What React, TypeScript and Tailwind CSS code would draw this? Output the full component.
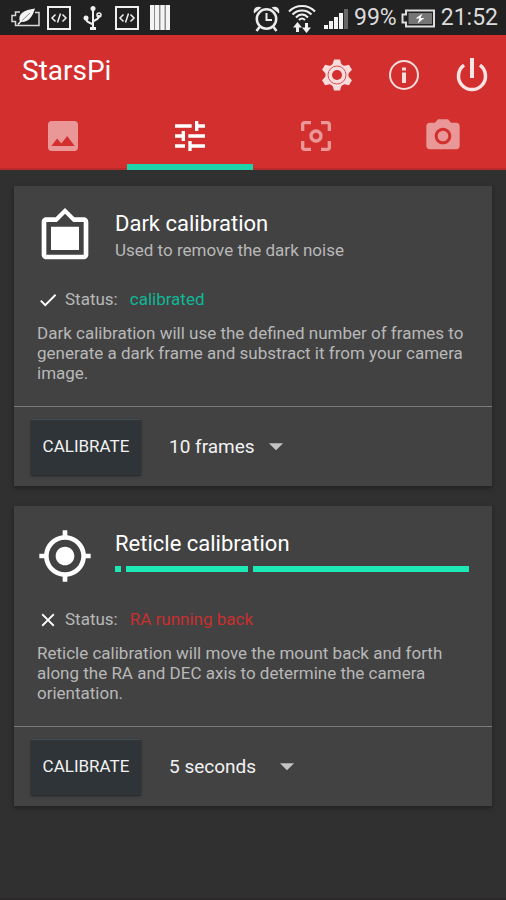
import type { ReactNode } from 'react';
import {
  MdArrowDropDown,
  MdCameraAlt,
  MdCenterFocusWeak,
  MdCheck,
  MdClose,
  MdFilterFrames,
  MdImage,
  MdMyLocation,
  MdTune,
} from 'react-icons/md';

const BatterySaverIcon = () => (
  <svg width="29" height="19" viewBox="0 0 29 19" fill="none">
    <path d="M9 4H4.500v3.500H1v6h3.500V17.500H28V4.500h-4" stroke="#d8d8d8" strokeWidth="1.500" />
    <path d="M9 14C6 6 13 2 24 .5C21.500 9 17 15 9 14Z" fill="#f4f4f4" />
    <path d="M10 13.500L19 5" stroke="#8a8a8a" strokeWidth="1" />
    <path d="M7 16.500L11 12" stroke="#f4f4f4" strokeWidth="1.500" />
  </svg>
);

const CodeIcon = () => (
  <svg width="24" height="24" viewBox="0 0 24 24" fill="none" stroke="#f0f0f0">
    <rect x="1" y="1" width="22" height="22" strokeWidth="2" />
    <path d="M8.500 8.500L5 12l3.500 3.500M15.500 8.500L19 12l-3.500 3.500M13.500 7.500l-3 9" strokeWidth="1.500" />
  </svg>
);

const UsbIcon = () => (
  <svg width="20" height="26" viewBox="0 0 20 26" fill="none" stroke="#f0f0f0" strokeWidth="2">
    <path d="M10 4v19M10 20C9 17 3 19 3 13M10 17c1-3 6-1 6-7" />
    <circle cx="10" cy="3.500" r="2.500" fill="#f0f0f0" stroke="none" />
    <circle cx="3" cy="13" r="2.500" fill="#f0f0f0" stroke="none" />
    <circle cx="16" cy="10" r="2" strokeWidth="1.500" />
    <path d="M7 23.500h6" strokeWidth="3" />
  </svg>
);

const BarsIcon = () => (
  <svg width="20" height="25" viewBox="0 0 20 25">
    <rect width="20" height="25" fill="#8c8c8c" />
    <path d="M0 0h4v25H0zM5 0h4v25H5zM10.500 0h4v25h-4zM16 0h4v25h-4z" fill="#f4f4f4" />
  </svg>
);

const AlarmIcon = () => (
  <svg width="27" height="27" viewBox="0 0 27 27" fill="none" stroke="#ececec" strokeWidth="2.500">
    <circle cx="13.500" cy="14" r="9.700" />
    <path d="M13.500 8v7h5.500" strokeWidth="2" />
    <path d="M6.500 22l-3 4M20.500 22l3 4" />
    <path d="M1 8.500C-.5 3 4 .5 8.500 2.500ZM26 8.500C27.500 3 23 .5 18.500 2.500Z" fill="#ececec" stroke="none" />
  </svg>
);

const WifiIcon = () => (
  <svg width="28" height="28" viewBox="0 0 28 28" fill="none" stroke="#f0f0f0" strokeWidth="2">
    <path d="M1 6.500C8-.8 20-.8 27 6.500M4.500 9.500c5-5.500 14-5.500 19 0M8 12.500c3.500-4 8.500-4 12 0M11 15c2-2 4-2 6 0" />
    <path d="M9.500 17l4.500 5.500h-3V27H8v-4.500H5zM18.500 28L14 22.500h3V18h3v4.500h3z" fill="#f0f0f0" stroke="none" />
  </svg>
);

const SignalIcon = () => (
  <svg width="24" height="20" viewBox="0 0 24 20">
    <path d="M0 16h4v4H0zM5 12h4v8H5zM10 8h4v12h-4zM15 4h4v16h-4z" fill="#f4f4f4" />
    <path d="M20 0h4v20h-4z" fill="#666" />
  </svg>
);

const BatteryIcon = () => (
  <svg width="34" height="19" viewBox="0 0 34 19">
    <path d="M5 1.500h28v16H5v-4H1.500v-8H5z" fill="#212121" stroke="#dedede" strokeWidth="2" />
    <path d="M7.500 4H31v11H7.500z" fill="#757575" />
    <path d="M21.500 4.500L14.500 9.500h4L16.500 14.500 23.500 9h-4z" fill="#fff" />
  </svg>
);

const GearIcon = () => (
  <svg width="30" height="32" viewBox="0 0 30 32" fill="none">
    <g fill="#f9dcdc">
      <circle cx="15" cy="16" r="11.500" />
      <path d="M12 .5h6l2 6.500v18l-2 6.500h-6L10 25V7z" />
      <path d="M12 .5h6l2 6.500v18l-2 6.500h-6L10 25V7z" transform="rotate(60 15 16)" />
      <path d="M12 .5h6l2 6.500v18l-2 6.500h-6L10 25V7z" transform="rotate(120 15 16)" />
    </g>
    <circle cx="15" cy="16" r="9" stroke="#d95252" strokeWidth="1" />
    <circle cx="15" cy="16" r="5" fill="#d32f2f" />
  </svg>
);

const InfoIcon = () => (
  <svg width="30" height="30" viewBox="0 0 30 30" fill="none">
    <circle cx="15" cy="15" r="14" stroke="#f9dcdc" strokeWidth="2" />
    <path d="M13 7.500h4v3h-4zM13 12.500h4V23h-4z" fill="#f9dcdc" />
  </svg>
);

const PowerIcon = () => (
  <svg width="32" height="34" viewBox="0 0 32 34" fill="none" stroke="#fbe4e4" strokeWidth="4">
    <path d="M16 0v20" />
    <path d="M8 7.200a13.500 13.500 0 1 0 16 0" strokeWidth="3.500" />
  </svg>
);

const tabs = [
  { label: 'Image', icon: MdImage },
  { label: 'Calibration', icon: MdTune },
  { label: 'Focus', icon: MdCenterFocusWeak },
  { label: 'Camera', icon: MdCameraAlt },
];

const StatusBar = () => (
  <div className="flex h-[35px] items-center justify-between bg-[#212121] pl-[11px] pr-2">
    <div className="flex items-center gap-[7px]">
      <BatterySaverIcon />
      <CodeIcon />
      <div className="px-[5px]"><UsbIcon /></div>
      <CodeIcon />
      <div className="pl-1"><BarsIcon /></div>
    </div>
    <div className="flex items-center gap-1 pt-0.5 text-[23px] text-[#dcdcdc]">
      <AlarmIcon />
      <div className="px-1"><WifiIcon /></div>
      <div className="pr-0.5"><SignalIcon /></div>
      <span>99%</span>
      <BatteryIcon />
      <span className="pl-0.5">21:52</span>
    </div>
  </div>
);

const Header = () => (
  <header className="border-b-2 border-[#b92b2b] bg-[#d32f2f]">
    <div className="flex h-[72px] items-center justify-between pl-[22px] pr-[18px]">
      <h1 className="text-[28px] text-white">StarsPi</h1>
      <div className="flex items-center gap-[37px] pt-2">
        <button aria-label="Settings"><GearIcon /></button>
        <button aria-label="Info"><InfoIcon /></button>
        <button aria-label="Power"><PowerIcon /></button>
      </div>
    </div>
    <nav className="-mb-0.5 grid grid-cols-4">
      {tabs.map(({ label, icon: Icon }) => {
        const active = label === 'Calibration';
        return (
          <button
            key={label}
            aria-label={label}
            className={`flex h-[63px] items-center justify-center border-b-6 ${active ? 'border-[#1dd3a9] text-white' : 'border-transparent text-white/50'}`}
          >
            <Icon size={40} />
          </button>
        );
      })}
    </nav>
  </header>
);

interface CardProps {
  id: string;
  icon: ReactNode;
  title: string;
  detail: ReactNode;
  ok: boolean;
  status: string;
  text: string;
  options: string[];
  selectWidth: string;
}

const CalibrationCard = ({ id, icon, title, detail, ok, status, text, options, selectWidth }: CardProps) => (
  <section className="bg-[#424242] shadow-[0_2px_5px_rgba(0,0,0,0.35)]">
    <div className="min-h-[220px] px-[23px] pt-[22px]">
      <div className="flex h-[81px] gap-[22px]">
        <div className="w-14 shrink-0 text-white">{icon}</div>
        <div className="flex-1">
          <h2 className="text-[22px] leading-8 text-white">{title}</h2>
          {detail}
        </div>
      </div>
      <div className="flex h-[22px] items-center text-[17px] text-[#b8b8b8]">
        {ok ? <MdCheck size={22} className="text-white" /> : <MdClose size={22} className="text-white" />}
        <span className="pl-1.5">Status:</span>
        <span className={`pl-3 ${ok ? 'text-[#0fb797]' : 'text-[#c92f2f]'}`}>{status}</span>
      </div>
      <p className="pt-3 text-[17px] leading-5 text-[#b8b8b8]">{text}</p>
    </div>
    <div className="flex h-20 items-center gap-7 border-t border-[#7b7b7b] pl-[17px]">
      <button className="h-14 w-[110px] border-t border-[#434c50] bg-[#2f3438] text-[17px] text-[#f2f2f2] shadow-[0_1px_2px_rgba(0,0,0,0.5)]">
        CALIBRATE
      </button>
      <div className={`relative ${selectWidth}`}>
        <select id={id} aria-label={title} className="block h-7 w-full appearance-none bg-transparent text-[19px] text-[#f2f2f2] outline-none">
          {options.map((option) => (
            <option key={option}>{option}</option>
          ))}
        </select>
        <MdArrowDropDown size={34} className="pointer-events-none absolute -right-3 -top-1 text-[#c4c4c4]" />
      </div>
    </div>
  </section>
);

export default function App() {
  return (
    <div className="flex min-h-screen flex-col bg-[#303030] font-['Roboto',sans-serif]">
      <StatusBar />
      <Header />
      <main className="flex flex-1 flex-col gap-5 px-3.5 pt-4">
        <CalibrationCard
          id="frames"
          icon={<MdFilterFrames size={56} />}
          title="Dark calibration"
          detail={<p className="text-[17px] leading-5 text-[#b8b8b8]">Used to remove the dark noise</p>}
          ok
          status="calibrated"
          text="Dark calibration will use the defined number of frames to generate a dark frame and substract it from your camera image."
          options={['10 frames', '20 frames', '50 frames']}
          selectWidth="w-28"
        />
        <CalibrationCard
          id="seconds"
          icon={<MdMyLocation size={56} />}
          title="Reticle calibration"
          detail={
            <div role="progressbar" aria-label="Reticle calibration" className="mt-1.5 flex h-1.5 gap-[5px]">
              <div className="w-1.5 bg-[#1de9b6]" />
              <div className="w-[122px] bg-[#1de9b6]" />
              <div className="flex-1 bg-[#1de9b6]" />
            </div>
          }
          ok={false}
          status="RA running back"
          text="Reticle calibration will move the mount back and forth along the RA and DEC axis to determine the camera orientation."
          options={['5 seconds', '10 seconds', '20 seconds']}
          selectWidth="w-[123px]"
        />
      </main>
      <div className="h-0.5 bg-[#2b2829]" />
    </div>
  );
}
